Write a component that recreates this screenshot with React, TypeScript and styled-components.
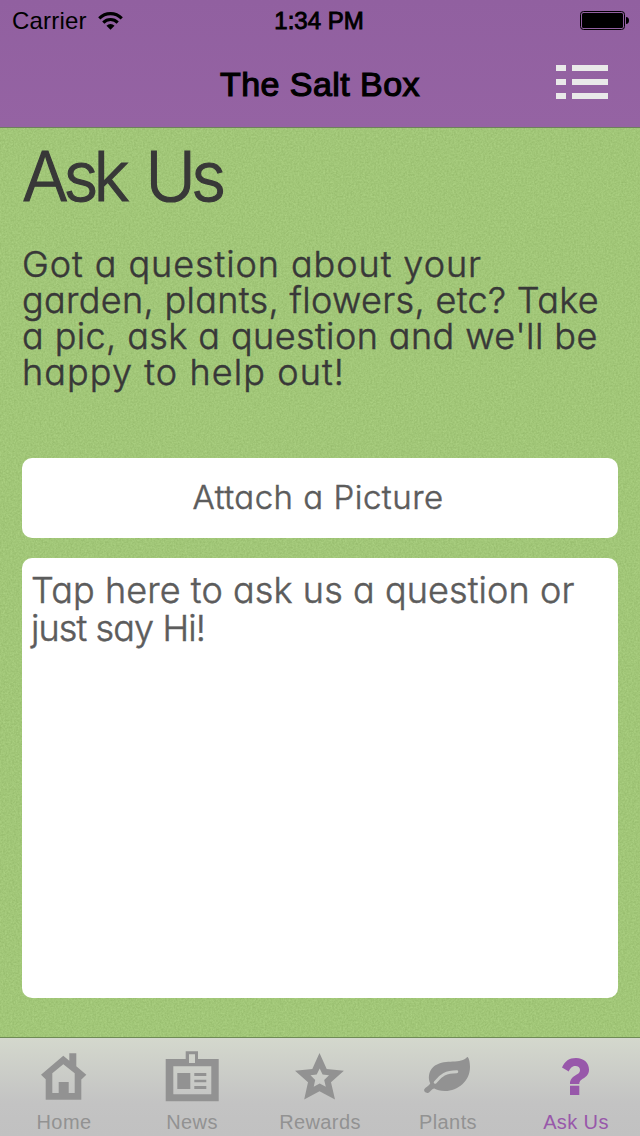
import React from "react";
import styled, { createGlobalStyle } from "styled-components";

const GlobalStyle = createGlobalStyle`
  * { box-sizing: border-box; }
  body { margin: 0; background: #a1c777; }
`;

const helvetica = `"Liberation Sans", Arial, sans-serif`;
const geometric = `Inter, "Liberation Sans", sans-serif`;

const Screen = styled.div`
  position: relative;
  isolation: isolate;
  display: flex;
  flex-direction: column;
  width: 640px;
  height: 1136px;
  overflow: hidden;
  background: #a1c777;
  font-family: ${helvetica};
`;

const Grain = styled.svg`
  position: absolute;
  inset: 0;
  z-index: -1;
  width: 100%;
  height: 100%;
`;

const Header = styled.header`
  height: 128px;
  background: linear-gradient(#9160a0, #9563a3);
  border-bottom: 1px solid #6d7f5c;
  color: #000;
`;

const StatusBar = styled.div`
  display: grid;
  grid-template-columns: 1fr auto 1fr;
  align-items: center;
  height: 40px;
  padding: 0 11px 0 12px;
`;

const Carrier = styled.div`
  display: flex;
  align-items: center;
  gap: 11px;
  padding-top: 1px;
  font-size: 24px;
  letter-spacing: 0.2px;
`;

const Clock = styled.div`
  padding: 1px 3px 0 0;
  font-size: 24px;
  -webkit-text-stroke: 0.9px currentColor;
`;

const Battery = styled.svg`
  justify-self: end;
`;

const NavBar = styled.div`
  display: grid;
  grid-template-columns: 52px 1fr 52px;
  align-items: center;
  height: 84px;
  padding: 0 32px;
`;

const NavTitle = styled.h1`
  grid-column: 2;
  margin: 4px 0 0;
  text-align: center;
  font-size: 34px;
  line-height: 40px;
  font-weight: 400;
  letter-spacing: 0.45px;
  -webkit-text-stroke: 1.2px currentColor;
`;

const Content = styled.main`
  display: flex;
  flex-direction: column;
  height: 909px;
  padding: 0 22px;
  font-family: ${geometric};
  font-weight: 300;
  font-feature-settings: "cv11" 1;
  -webkit-text-stroke: 0.5px currentColor;
  color: #383838;
`;

const Heading = styled.h2`
  margin: 5px 0 0;
  height: 87px;
  font-size: 69px;
  line-height: 87px;
  font-weight: 300;
  word-spacing: 7px;
  -webkit-text-stroke: 1.2px currentColor;
`;

const Intro = styled.p`
  margin: 26px 0 0;
  height: 144px;
  font-size: 36px;
  line-height: 36px;
`;

const Line = styled.span<{ $track: number }>`
  display: block;
  white-space: nowrap;
  letter-spacing: ${(p) => p.$track}px;
`;

const AttachButton = styled.button`
  margin: 68px 0 0;
  height: 80px;
  padding: 0 4px 2px 0;
  border: 0;
  border-radius: 10px;
  background: #fff;
  color: #5c5c5c;
  font: inherit;
  font-feature-settings: inherit;
  font-size: 33px;
`;

const Question = styled.div`
  margin-top: 20px;
  height: 440px;
  padding: 13px 9px;
  border-radius: 10px;
  background: #fff;
  color: #5c5c5c;
  font-size: 36px;
  line-height: 38px;
`;

const TabBar = styled.nav`
  display: grid;
  grid-template-columns: repeat(5, 128px);
  height: 99px;
  border-top: 1px solid #6f8b55;
  background: linear-gradient(#d4d8cd 0, #c3c3c3 65px, #c1c1c1 100%);
`;

const Tab = styled.div<{ $active?: boolean }>`
  display: flex;
  flex-direction: column;
  align-items: center;
  color: ${(p) => (p.$active ? "#9858aa" : "#929292")};
  font-size: 20px;
  line-height: 24px;
  letter-spacing: 0.4px;
  svg { flex: none; fill: currentColor; }
`;

const TabIcon = ({ children }: { children: React.ReactNode }) => (
  <svg width="128" height="72" viewBox="0 0 128 72">{children}</svg>
);

const tabs = [
  {
    label: "Home",
    icon: (
      <path fillRule="evenodd" d="M63.3 17.7L69.3 22.7V15.3H76.3V28.2L86.3 36.7L81.7 41.3H81.3V61.7H45.7V41.3L41 36.7ZM63.3 26.3L52.3 35.3V55H58.7V44H68.7V55H74.7V35.3Z" />
    ),
  },
  {
    label: "News",
    icon: (
      <path fillRule="evenodd" d="M37.7 21H57.7V13.3H70V21H90.7V63.3H37.7ZM45.3 28.3V56.3H83.3V28.3ZM61 16.3V25H67V16.3ZM49.3 35H62.3V51H49.3ZM66.3 35H78.3V38H66.3ZM66.3 41.7H78.3V44.3H66.3ZM66.3 48H78.3V51H66.3Z" />
    ),
  },
  {
    label: "Rewards",
    icon: (
      <path fillRule="evenodd" d="M63.5 15L70.7 31L87.9 32.7L75 44.3L79 61.5L63.5 53.3L48.2 61.5L52 44.3L39 32.7L56.3 31ZM63.7 30.5L60.7 36.6L54.5 37.3L59.2 42L57.7 48.7L63.7 45.4L69.8 48.7L68.2 42L73 37.3L66.6 36.6Z" />
    ),
  },
  {
    label: "Plants",
    icon: (
      <>
        <path d="M83.2 18.9C84.8 18.7 86 24 86 29C86 43 74 53 61 53C56 53 53 52 50.3 50.5C47.5 51 46 54.7 43.8 55C41.5 55.2 39.5 53 40.3 51.3C41.5 49 45.3 47.8 46.2 45.5C43 38 46 31 51 27.5C62 20.5 77 26.5 83.2 18.9Z" />
        <path d="M51.2 44.3C57 37 62 33.8 72.8 33.8" fill="none" stroke="#c9cbc7" strokeWidth="2.9" strokeLinecap="round" />
      </>
    ),
  },
  {
    label: "Ask Us",
    active: true,
    icon: (
      <path d="M50 29.5C53 23 57 20 64 20C72 20 77 25 77 31.5C77 41 67.3 39.5 67.3 46H58C58 36.5 68 38 68 32C68 29.5 66 28 63.5 28C60.5 28 58.5 29.5 56.8 33.5ZM58 47.7H67.3V57H58Z" />
    ),
  },
];

export default function App() {
  return (
    <Screen>
      <GlobalStyle />
      <Grain aria-hidden="true">
        <filter id="grain" x="0" y="0" width="100%" height="100%" colorInterpolationFilters="sRGB">
          <feTurbulence type="fractalNoise" baseFrequency="0.55" numOctaves="3" seed="4" />
          <feColorMatrix values="0.11 0 0 0 0.577  0.11 0 0 0 0.723  0.11 0 0 0 0.415  0 0 0 0 1" />
        </filter>
        <rect width="100%" height="100%" filter="url(#grain)" />
      </Grain>
      <Header>
        <StatusBar>
          <Carrier>
            Carrier
            <svg width="25" height="20" viewBox="0 0 26 20">
              <g fill="none" stroke="#000" strokeWidth="3.2">
                <path d="M1.3 7.2A16.5 16.5 0 0 1 24.7 7.2" />
                <path d="M5.5 11.6A10.6 10.6 0 0 1 20.5 11.6" />
              </g>
              <path d="M8.8 14.9A6 6 0 0 1 17.2 14.9L13 19.2Z" />
            </svg>
          </Carrier>
          <Clock>1:34 PM</Clock>
          <Battery width="49" height="19" viewBox="0 0 49 19">
            <rect x="0.5" y="0.5" width="44" height="18" rx="3" fill="none" stroke="#000" />
            <rect x="2" y="2" width="41" height="15" rx="1.5" />
            <path d="M46 6C48 6 49 7.5 49 9.5S48 13 46 13Z" />
          </Battery>
        </StatusBar>
        <NavBar>
          <NavTitle>The Salt Box</NavTitle>
          <svg width="52" height="34" viewBox="0 0 52 34" fill="#e9e9e9">
            <path d="M0 0H10V6H0ZM16 0H52V6H16ZM0 14H10V20H0ZM16 14H52V20H16ZM0 28H10V34H0ZM16 28H52V34H16Z" />
          </svg>
        </NavBar>
      </Header>
      <Content>
        <Heading>
          <Line $track={-5.4}>Ask Us</Line>
        </Heading>
        <Intro>
          <Line $track={0.94}>Got a question about your</Line>
          <Line $track={0.35}>garden, plants, flowers, etc? Take</Line>
          <Line $track={0.42}>a pic, ask a question and we'll be</Line>
          <Line $track={1.1}>happy to help out!</Line>
        </Intro>
        <AttachButton>
          <Line $track={0.5}>Attach a Picture</Line>
        </AttachButton>
        <Question>
          <Line $track={0.1}>Tap here to ask us a question or</Line>
          <Line $track={-0.9}>just say Hi!</Line>
        </Question>
      </Content>
      <TabBar>
        {tabs.map((t) => (
          <Tab key={t.label} $active={t.active}>
            <TabIcon>{t.icon}</TabIcon>
            {t.label}
          </Tab>
        ))}
      </TabBar>
    </Screen>
  );
}
